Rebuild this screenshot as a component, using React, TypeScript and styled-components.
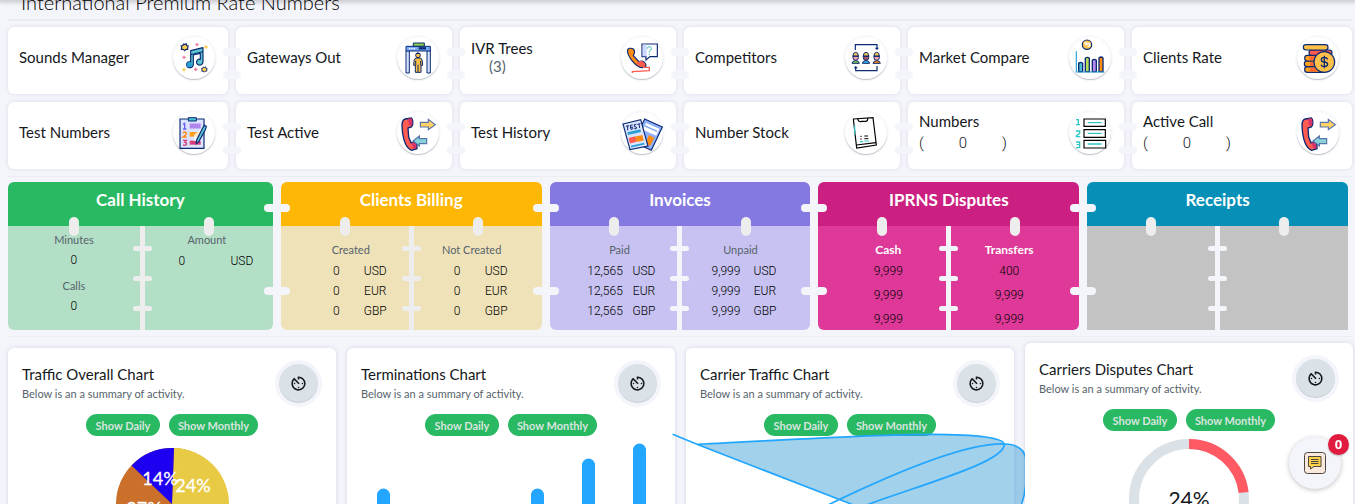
import React from 'react';
import styled, { createGlobalStyle } from 'styled-components';
import { MdAvTimer } from 'react-icons/md';

const page = '#f4f5fb';
const navy = '#0a2a72';

const GlobalStyle = createGlobalStyle`
  * { box-sizing: border-box; }
  body {
    margin: 0;
    background: ${page};
    color: #15181c;
    font-family: Lato, "Open Sans", sans-serif;
    font-size: 12px;
  }
  button { font-family: inherit; border: 0; padding: 0; cursor: pointer; }
  h1, h2, h3, p { margin: 0; font-weight: 400; }
`;

const Shell = styled.div`
  height: 100vh;
  overflow: hidden;
  background: ${page};
`;

const TopBar = styled.header`
  height: 0;
  position: relative;
  box-shadow: 0 0 4px 2px rgba(0, 0, 0, 0.22);
`;

const Main = styled.main`
  display: flex;
  flex-direction: column;
  padding: 0 3px 0 8px;
`;

const Heading = styled.h1`
  margin: -11px 0 4px 13px;
  font-size: 20px;
  font-weight: 300;
  line-height: 26px;
  color: #000;
`;

const Rule = styled.hr<{ $size: number; $after: number }>`
  width: 100%;
  height: ${(p) => p.$size}px;
  margin: 0 0 ${(p) => p.$after}px;
  border: 0;
  background: ${(p) => (p.$size > 1 ? '#eaebef' : '#ecedf3')};
`;

const TileGrid = styled.nav`
  display: grid;
  grid-template-columns: 220fr 216fr 216fr 216fr 216fr 220fr;
  gap: 8px;
  margin-bottom: 7px;
`;

const Tile = styled.a`
  position: relative;
  display: flex;
  align-items: center;
  justify-content: space-between;
  height: 67px;
  padding: 0 13px 6px 11px;
  border-radius: 6px;
  background: #fff;
  box-shadow: 0 0 4px rgba(30, 35, 90, 0.12);
  color: inherit;
  text-decoration: none;
`;

const TileText = styled.span`
  display: flex;
  flex-direction: column;
  padding-bottom: 2px;
`;

const TileTitle = styled.span<{ $tall?: boolean }>`
  font-size: 15px;
  line-height: ${(p) => (p.$tall ? 22 : 18)}px;
`;

const TileCount = styled.span`
  padding-left: 18px;
  font-size: 15px;
  line-height: 18px;
  color: #56636b;
`;

const TileTotal = styled.span`
  display: flex;
  justify-content: space-between;
  width: 88px;
  font-family: Roboto, sans-serif;
  font-size: 15px;
  font-weight: 300;
  line-height: 22px;
`;

const IconDisc = styled.span`
  display: grid;
  place-items: center;
  width: 42px;
  height: 42px;
  border-radius: 50%;
  background: #fff;
  box-shadow: 0 1px 1px rgba(40, 50, 60, 0.28), 0 0 0 2px #f8f9fd;
`;

const Art = styled.svg`
  width: 40px;
  height: 40px;
  overflow: visible;
`;

const TileLink = styled.i<{ $top: number }>`
  position: absolute;
  z-index: 1;
  top: ${(p) => p.$top}px;
  right: -13px;
  width: 18px;
  height: 8px;
  border-radius: 4px;
  background: ${page};
`;

const PanelRow = styled.section`
  display: grid;
  grid-template-columns: repeat(5, 1fr);
  margin-bottom: 6px;
`;

const PanelColumn = styled.div`
  position: relative;
  padding: 0 4px;
  &:first-child { padding-left: 0; }
`;

const Panel = styled.article<{ $square?: boolean }>`
  height: 148px;
  overflow: hidden;
  border-radius: ${(p) => (p.$square ? '6px 6px 0 0' : '6px')};
`;

const PanelTitle = styled.h2<{ $color: string }>`
  height: 44px;
  padding-top: 6px;
  background: ${(p) => p.$color};
  color: #fff;
  font-size: 17px;
  font-weight: 700;
  line-height: 24px;
  text-align: center;
`;

const PanelBody = styled.div<{ $color: string; $first?: boolean }>`
  display: grid;
  grid-template-columns: ${(p) => (p.$first ? '132fr 5px 128fr' : '1fr 5px 1fr')};
  height: 104px;
  background: ${(p) => p.$color};
`;

const Half = styled.div<{ $pad: string }>`
  position: relative;
  padding: ${(p) => p.$pad};
  text-align: center;
`;

const Peg = styled.i<{ $color: string }>`
  position: absolute;
  top: -9px;
  left: calc(50% - 5px);
  width: 10px;
  height: 19px;
  border-radius: 5px;
  background: ${(p) => p.$color};
`;

const Divider = styled.div<{ $color: string }>`
  display: flex;
  flex-direction: column;
  align-items: center;
  gap: 25px;
  padding-top: 20px;
  background: ${(p) => p.$color};
  i {
    flex: none;
    width: 19px;
    height: 5px;
    border-radius: 3px;
    background: ${(p) => p.$color};
    z-index: 1;
  }
`;

const PanelLink = styled.i<{ $top: number }>`
  position: absolute;
  z-index: 1;
  top: ${(p) => p.$top}px;
  right: -13px;
  width: 26px;
  height: 8px;
  border-radius: 4px;
  background: ${page};
`;

const Label = styled.h3<{ $light?: boolean }>`
  position: relative;
  font-size: ${(p) => (p.$light ? 12 : 11)}px;
  line-height: 20px;
  margin-bottom: ${(p) => (p.$light ? -1 : 0)}px;
  font-weight: ${(p) => (p.$light ? 700 : 400)};
  color: ${(p) => (p.$light ? '#fff' : '#56636b')};
`;

const Value = styled.p<{ $height: number; $after?: number }>`
  font-family: Roboto, sans-serif;
  font-size: 12px;
  font-weight: 300;
  line-height: ${(p) => p.$height}px;
  margin-bottom: ${(p) => p.$after || 0}px;
  color: #000;
`;

const Amounts = styled.table<{ $wide?: boolean }>`
  border-collapse: collapse;
  table-layout: fixed;
  width: ${(p) => (p.$wide ? 120 : 78)}px;
  margin: 1px auto 0;
  position: relative;
  left: 5px;
  td {
    padding: 0;
    font-family: Roboto, sans-serif;
    font-size: 12px;
    font-weight: 300;
    line-height: 20px;
    color: #000;
  }
`;

const ChartGrid = styled.section`
  display: grid;
  grid-template-columns: repeat(4, 1fr);
  gap: 11px;
  margin-right: 1px;
`;

const ChartCard = styled.article<{ $raised?: boolean }>`
  position: relative;
  margin-top: ${(p) => (p.$raised ? -5 : 0)}px;
  padding: 12px 14px;
  border-radius: 6px;
  background: #fff;
  box-shadow: 0 0 5px rgba(30, 35, 90, 0.14);
`;

const ChartHead = styled.header`
  display: flex;
  justify-content: space-between;
  height: 54px;
`;

const ChartTitle = styled.h2`
  padding-top: 3px;
  font-size: 15px;
  line-height: 22px;
`;

const ChartNote = styled.p`
  font-size: 11px;
  line-height: 18px;
  color: #56636b;
`;

const ClockButton = styled.button`
  display: grid;
  place-items: center;
  width: 47px;
  height: 47px;
  border: 4px solid ${page};
  border-radius: 50%;
  background: #dae1e7;
  box-shadow: inset 0 -1px 0 #c6cdd2;
  color: #15181c;
`;

const Switches = styled.div`
  display: flex;
  justify-content: center;
  gap: 9px;
`;

const Pill = styled.button<{ $wide?: boolean }>`
  width: ${(p) => (p.$wide ? 89 : 74)}px;
  height: 22px;
  border-radius: 11px;
  background: #28b962;
  color: #d8e5df;
  font-size: 11px;
  font-weight: 700;
`;

const Plot = styled.svg`
  display: block;
  width: 300px;
  height: 140px;
  margin: 0 auto;
  overflow: visible;
  text {
    font-family: Lato, sans-serif;
    text-anchor: middle;
  }
`;

const Chat = styled.button`
  position: fixed;
  z-index: 3;
  right: 14px;
  bottom: 15px;
  display: grid;
  place-items: center;
  width: 52px;
  height: 52px;
  border-radius: 50%;
  background: ${page};
  box-shadow: 0 1px 5px rgba(0, 0, 0, 0.25);
`;

const Badge = styled.span`
  position: absolute;
  top: -3px;
  right: -8px;
  width: 21px;
  height: 21px;
  border-radius: 50%;
  background: #e01b3f;
  box-shadow: 0 1px 2px rgba(0, 0, 0, 0.25);
  color: #fff;
  font: 700 13px/21px "Open Sans", sans-serif;
`;

const Sparkle = ({ x, y, c }: { x: number; y: number; c: string }) => (
  <path d={`M${x} ${y - 5}V${y + 5}M${x - 5} ${y}H${x + 5}`} stroke={c} strokeWidth="4" />
);

const Star = ({ x, y, r }: { x: number; y: number; r: number }) => (
  <path
    transform={`translate(${x} ${y}) scale(${r / 10})`}
    d="M-4-10 1-8 5-11 7-5 12-3 10 3 10 8 4 8 0 12-5 8-11 8-10 1-12-4-6-5Z"
    fill="#ffc94d" stroke={navy} strokeWidth="4" strokeLinejoin="round"
  />
);

const SoundsArt = () => (
  <Art viewBox="0 0 120 120">
    <Star x={32} y={27} r={9} />
    <Star x={91} y={94} r={7} />
    <Sparkle x={69} y={20} c="#f07aa0" />
    <Sparkle x={96} y={27} c="#ffc94d" />
    <Sparkle x={30} y={58} c="#f07aa0" />
    <Sparkle x={30} y={95} c="#ffc94d" />
    <Sparkle x={65} y={94} c="#f07aa0" />
    <path d="M50 38 87 29V71C87 79 80 82 75 81 68 80 66 73 69 68 71 64 76 63 79 64V46L58 51V80C57 87 51 90 45 89 38 88 36 80 39 75 42 71 47 71 50 72Z" fill="#5cc4d0" stroke={navy} strokeWidth="3.5" strokeLinejoin="round" />
    <ellipse cx="46" cy="80" rx="8" ry="7" fill="#289fd2" />
    <path d="M50 50 87 41" stroke={navy} strokeWidth="3" />
  </Art>
);

const GatewayArt = () => (
  <Art viewBox="0 0 120 120">
    <path d="M46 15H79V25H46Z" fill="#8fd14f" stroke={navy} strokeWidth="3" />
    <path d="M24 38H34V105H24ZM87 38H97V105H87Z" fill="#d5e2ff" stroke={navy} strokeWidth="3" />
    <path d="M24 25H97V39H24Z" fill="#78aaf5" stroke={navy} strokeWidth="3" />
    <path d="M62 31H84" stroke={navy} strokeWidth="7" />
    <path d="M33 32H52" stroke="#fff" strokeWidth="4" strokeDasharray="4 3" />
    <circle cx="60" cy="52" r="7" fill="#ffbd42" stroke={navy} strokeWidth="3" />
    <path d="M52 48Q60 39 68 48Z" fill={navy} />
    <path d="M53 60H68Q74 62 74 82H69V103H52V82H47Q47 62 53 60Z" fill="#ffbd42" stroke={navy} strokeWidth="3" />
    <path d="M53 68V82M68 68V82M60 80V103" stroke={navy} strokeWidth="3" />
  </Art>
);

const IvrArt = () => (
  <Art viewBox="0 0 120 120">
    <path d="M60 18H106V56H84L72 66V56H60Z" fill="#fff" stroke={navy} strokeWidth="3.5" />
    <path d="M62 20H74V55H62Z" fill="#cbd9ff" />
    <path d="M76 32Q76 26 82 26T88 32Q88 37 82 40V44M82 48V51" fill="none" stroke="#3fb9bd" strokeWidth="3" />
    <path d="M17 36C17 31 27 28 35 34 41 41 36 48 34 53L51 71C56 68 64 68 68 74 74 79 73 86 68 87 56 93 42 83 30 68 20 55 15 45 17 36Z" fill="#ff8b12" stroke={navy} strokeWidth="3.5" />
    <path d="M42 76 53 70C61 66 72 76 69 85 59 90 51 84 42 76Z" fill="#ff5b50" />
    <path d="M63 88H82V98L31 101V105" fill="none" stroke="#ff5b50" strokeWidth="4" />
  </Art>
);

const CompetitorsArt = () => (
  <Art viewBox="0 0 120 120">
    <path d="M28 36V20H93V30M93 84V98H29V90" fill="none" stroke={navy} strokeWidth="3.5" />
    <path d="M86 29H99L93 36ZM23 91H36L29 84Z" fill={navy} />
    {[{ x: 29, skin: '#f7a7ad', body: '#8ad14b' }, { x: 60, skin: '#a9575b', body: '#45b9e8' }, { x: 92, skin: '#f7a7ad', body: '#ff8b12' }].map((m) => (
      <g key={m.x} transform={`translate(${m.x} 0)`} stroke={navy} strokeWidth="3">
        <path d="M-11 76Q-10 68 0 68T11 76Z" fill={m.body} />
        <circle cy="59" r="8" fill={m.skin} />
        <path d="M-10 55H10M-8 54Q-8 43 0 43T8 54Z" fill="#ffc94d" />
      </g>
    ))}
  </Art>
);

const MarketArt = () => (
  <Art viewBox="0 0 120 120">
    <circle cx="51" cy="20" r="14" fill="#ffc04a" stroke={navy} strokeWidth="3.5" />
    <path d="M43 15H50V20H45M53 17H59V23L53 26" fill="none" stroke="#fff" strokeWidth="4" />
    {[{ x: 26, y: 73, c: '#48bdd0' }, { x: 46, y: 58, c: '#b5df58' }, { x: 67, y: 64, c: '#b98cf0' }, { x: 87, y: 57, c: '#ff8b12' }].map((b) => (
      <path key={b.x} d={`M${b.x} 101V${b.y + 3}Q${b.x + 6} ${b.y - 3} ${b.x + 12} ${b.y + 3}V101Z`} fill={b.c} stroke={navy} strokeWidth="4" />
    ))}
    <path d="M19 40V102H103" fill="none" stroke="#2a9fd6" strokeWidth="3.5" />
  </Art>
);

const RateArt = () => (
  <Art viewBox="0 0 120 120">
    <g stroke={navy} strokeWidth="3.5">
      <rect x="20" y="86" width="60" height="17" rx="8" fill="#ffa01e" />
      <rect x="19" y="69" width="60" height="17" rx="8" fill="#ffa01e" />
      <rect x="20" y="52" width="60" height="17" rx="8" fill="#ffa01e" />
      <rect x="33" y="36" width="69" height="16" rx="8" fill="#ff5b50" />
      <rect x="16" y="20" width="74" height="16" rx="8" fill="#ffc04a" />
    </g>
    <path d="M34 61H54M36 78H50M36 95H56" stroke="#ff6a30" strokeWidth="12" />
    <circle cx="79" cy="72" r="31" fill="#ffc04a" stroke={navy} strokeWidth="3.5" />
    <path d="M89 64Q86 58 79 58 70 58 70 65T79 72Q89 73 89 79T79 86Q71 86 69 80M79 53V91" fill="none" stroke={navy} strokeWidth="4" />
  </Art>
);

const TestNumbersArt = () => (
  <Art viewBox="0 0 120 120">
    <path d="M18 18H90V106H18Z" fill="#dbe3ff" stroke={navy} strokeWidth="3.5" />
    <path d="M43 14H67V24H43Z" fill="#48bdd0" stroke={navy} strokeWidth="3" />
    <g fill="none" strokeWidth="4">
      <path d="M27 34 32 31V48M27 48H37" stroke="#6c5cf0" />
      <path d="M27 61Q27 57 32 57T37 61 27 72H38" stroke="#ff8b12" />
      <path d="M27 82H37L32 88Q38 88 38 93T27 96" stroke="#d83d7d" />
      <path d="M47 39H80" stroke="#ae87ed" strokeWidth="15" />
      <path d="M47 64H80" stroke="#ff9d1c" strokeWidth="14" />
      <path d="M47 89H80" stroke="#d83d7d" strokeWidth="12" />
    </g>
    <path d="M60 84V66L82 46V84Z" fill="#fff" opacity=".75" />
    <path d="M86 45 91 37 97 40 94 50 75 85 67 92 68 81Z" fill="#5cc4d0" stroke={navy} strokeWidth="3.5" />
  </Art>
);

const CallArt = () => (
  <Art viewBox="0 0 120 120">
    <path d="M22 18 40 15Q46 20 44 35L40 42 30 45 32 72 39 89 51 87Q58 94 57 107L41 112C25 105 14 83 12 38 12 25 16 19 22 18Z" fill="#ff5b50" stroke={navy} strokeWidth="4" />
    <path d="M30 17 41 16Q45 25 42 37L34 38ZM41 89 51 88Q57 95 55 106L46 107Z" fill="#d83469" />
    <path d="M67 28H91V19L112 35 91 50V42H67Z" fill="#ffd166" stroke="#5874ab" strokeWidth="3.5" />
    <path d="M86 77H64V69L45 84 64 99V92H86Z" fill="#87d4d8" stroke="#5874ab" strokeWidth="3.5" />
  </Art>
);

const HistoryArt = () => (
  <Art viewBox="0 0 120 120">
    <path d="M68 18 121 42 88 112 35 88Z" fill="#8fb0fa" stroke={navy} strokeWidth="3.5" />
    <path d="M72 30 112 47 103 68 62 50Z" fill="#fff" />
    <path d="M67 38 105 55" stroke="#7ca2f2" strokeWidth="4" />
    <path d="M80 66 97 74 85 98 72 92Z" fill="#ff8b12" />
    <path d="M3 33 56 20 78 99 24 110Z" fill="#dbe3ff" stroke={navy} strokeWidth="3.5" />
    <path d="M12 40 21 38M17 39V52M32 36 25 37 27 49 34 47M26 43H33M43 34 37 35V41L43 42V47H37M46 34 55 32M51 33 53 45" fill="none" stroke={navy} strokeWidth="3" />
    <path d="M17 62 56 53" stroke="#2a9fd6" strokeWidth="8" />
    <path d="M22 83 42 78" stroke="#ff5b50" strokeWidth="17" />
    <path d="M42 79 63 74" stroke="#ff8b12" strokeWidth="17" />
    <path d="M27 101 67 92" stroke="#2a9fd6" strokeWidth="5" />
  </Art>
);

const StockArt = () => (
  <Art viewBox="0 0 120 120" fill="none" strokeWidth="3.5">
    <path d="M22 18 81 14 91 96 32 105Z" stroke="#000" />
    <path d="M35 17Q37 28 47 25H60Q66 24 65 15M31 96 90 89" stroke="#000" />
    <path d="M43 70H47M55 69H66M43 78H47M55 77H67" stroke="#000" strokeWidth="3" />
    <path d="M26 37V61L29 64M42 86H51M55 84H69" stroke="#32c5c6" />
  </Art>
);

const NumbersArt = () => (
  <Art viewBox="0 0 120 120" fill="none">
    <path d="M18 20H25V34M18 35H30M18 54H29V61L19 69V71H31M18 87H29V104H18M20 95H29" stroke="#32c5c6" strokeWidth="4" />
    <path d="M42 18H106V40H42ZM42 50H106V73H42ZM42 82H107V105H42Z" stroke="#000" strokeWidth="3.5" />
    <path d="M53 29H95M53 61H95M53 93H95" stroke="#32c5c6" strokeWidth="4" />
  </Art>
);

type TileData = { title: string; art: () => React.ReactElement; count?: string; total?: string };

const tiles: TileData[] = [
  { title: 'Sounds Manager', art: SoundsArt },
  { title: 'Gateways Out', art: GatewayArt },
  { title: 'IVR Trees', art: IvrArt, count: '(3)' },
  { title: 'Competitors', art: CompetitorsArt },
  { title: 'Market Compare', art: MarketArt },
  { title: 'Clients Rate', art: RateArt },
  { title: 'Test Numbers', art: TestNumbersArt },
  { title: 'Test Active', art: CallArt },
  { title: 'Test History', art: HistoryArt },
  { title: 'Number Stock', art: StockArt },
  { title: 'Numbers', art: NumbersArt, total: '0' },
  { title: 'Active Call', art: CallArt, total: '0' },
];

type Side = { label: string; rows: string[][] };
type PanelData = { title: string; head: string; body: string; line: string; light?: boolean; sides?: Side[] };

const currencies = (n: string) => [[n, 'USD'], [n, 'EUR'], [n, 'GBP']];

const panels: PanelData[] = [
  { title: 'Call History', head: '#28b962', body: '#b3dfc7', line: '#ededed' },
  { title: 'Clients Billing', head: '#feb704', body: '#efe2b9', line: '#ededed', sides: [{ label: 'Created', rows: currencies('0') }, { label: 'Not Created', rows: currencies('0') }] },
  { title: 'Invoices', head: '#8379e0', body: '#c7c2f1', line: page, sides: [{ label: 'Paid', rows: currencies('12,565') }, { label: 'Unpaid', rows: currencies('9,999') }] },
  { title: 'IPRNS Disputes', head: '#cb2082', body: '#de3998', line: page, light: true, sides: [{ label: 'Cash', rows: [['9,999'], ['9,999'], ['9,999']] }, { label: 'Transfers', rows: [['400'], ['9,999'], ['9,999']] }] },
  { title: 'Receipts', head: '#0690b8', body: '#c3c3c3', line: page },
];

const AmountTable = ({ rows, wide }: { rows: string[][]; wide?: boolean }) => (
  <Amounts $wide={wide}>
    <tbody>
      {rows.map((r, i) => <tr key={i}>{r.map((c) => <td key={c}>{c}</td>)}</tr>)}
    </tbody>
  </Amounts>
);

const SideContent = ({ side, light }: { side: Side; light?: boolean }) => (
  <>
    <Label $light={light}>{side.label}</Label>
    {light ? side.rows.map((r, i) => <Value key={i} $height={24}>{r[0]}</Value>) : <AmountTable rows={side.rows} />}
  </>
);

const StatPanel = ({ data, index }: { data: PanelData; index: number }) => {
  const first = index === 0;
  return (
    <PanelColumn>
      <Panel $square={index === 4}>
        <PanelTitle $color={data.head}>{data.title}</PanelTitle>
        <PanelBody $color={data.body} $first={first}>
          <Half $pad={first ? '4px 0 0' : '14px 0 0 12px'}>
            <Peg $color="#ededed" />
            {first && (
              <>
                <Label>Minutes</Label>
                <Value $height={20} $after={6}>0</Value>
                <Label>Calls</Label>
                <Value $height={20}>0</Value>
              </>
            )}
            {data.sides && <SideContent side={data.sides[0]} light={data.light} />}
          </Half>
          <Divider $color={data.line}><i /><i /><i /></Divider>
          <Half $pad={first ? '4px 4px 0 0' : '14px 12px 0 0'}>
            <Peg $color="#ededed" />
            {first && (
              <>
                <Label>Amount</Label>
                <AmountTable wide rows={[['0', 'USD']]} />
              </>
            )}
            {data.sides && <SideContent side={data.sides[1]} light={data.light} />}
          </Half>
        </PanelBody>
      </Panel>
      {index < 4 && <><PanelLink $top={22} /><PanelLink $top={105} /></>}
    </PanelColumn>
  );
};

const PiePlot = () => (
  <Plot viewBox="0 0 300 140">
    <circle cx="150" cy="68" r="56" fill="#ca702a" />
    <path d="M150 68 152 12A56 56 0 0 1 150 124Z" fill="#e8ca45" />
    <path d="M150 68 109.500 29.500A56 56 0 0 1 152 12Z" fill="#1d00f0" />
    <g fill="#fff" stroke="#fff" strokeWidth=".3" fontSize="18">
      <text x="138" y="49">14%</text>
      <text x="171" y="56">24%</text>
      <text x="122" y="79">27%</text>
    </g>
  </Plot>
);

const BarPlot = () => (
  <Plot viewBox="0 0 300 140">
    {[{ x: 16, y: 53 }, { x: 67, y: 98 }, { x: 118, y: 83 }, { x: 170, y: 53 }, { x: 221, y: 23 }, { x: 272, y: 8 }].map((b) => (
      <path key={b.x} d={`M${b.x} 140V${b.y + 6}a6.500 6.500 0 0 1 13 0V140Z`} fill="#22a6ff" />
    ))}
  </Plot>
);

const CurvePlot = () => (
  <Plot viewBox="0 0 300 140">
    <g transform="translate(-29 -101) scale(.3333)">
      <path d="M78 328C380 313 620 298 760 298 900 297 990 307 1000 327 1035 326 1063 345 1064 372V450Q1062 480 1052 507L1030 560H680L540 507Z" fill="rgba(34,145,207,.42)" />
      <path d="M5 298 78 328 540 507 620 540M78 328C380 313 620 298 760 298 930 297 1000 310 1000 329 998 380 780 440 595 507L500 540M400 545C640 425 880 322 1000 327 1035 326 1063 345 1064 372V450Q1062 480 1052 507" fill="none" stroke="#22a6ff" strokeWidth="5" />
    </g>
  </Plot>
);

const DonutPlot = () => (
  <Plot viewBox="0 0 300 140">
    <circle cx="150" cy="68" r="55" fill="none" stroke="#dae1e7" strokeWidth="10" />
    <path d="M150 13A55 55 0 0 1 204.600 61.500" fill="none" stroke="#ff5a64" strokeWidth="10" />
    <text x="150" y="76" fontSize="21" fill="#15181c">24%</text>
  </Plot>
);

const charts = [
  { title: 'Traffic Overall Chart', plot: PiePlot },
  { title: 'Terminations Chart', plot: BarPlot },
  { title: 'Carrier Traffic Chart', plot: CurvePlot },
  { title: 'Carriers Disputes Chart', plot: DonutPlot },
];

export default function App() {
  return (
    <Shell>
      <GlobalStyle />
      <TopBar />
      <Main>
        <Heading>International Premium Rate Numbers</Heading>
        <Rule $size={2} $after={6} />
        <TileGrid>
          {tiles.map((t, i) => (
            <Tile key={t.title} href="#">
              <TileText>
                <TileTitle $tall={!!t.total}>{t.title}</TileTitle>
                {t.count && <TileCount>{t.count}</TileCount>}
                {t.total && <TileTotal><span>(</span><span>{t.total}</span><span>)</span></TileTotal>}
              </TileText>
              <IconDisc><t.art /></IconDisc>
              {i % 6 < 5 && <><TileLink $top={21} /><TileLink $top={44} /></>}
            </Tile>
          ))}
        </TileGrid>
        <Rule $size={1} $after={5} />
        <PanelRow>
          {panels.map((p, i) => <StatPanel key={p.title} data={p} index={i} />)}
        </PanelRow>
        <Rule $size={1} $after={11} />
        <ChartGrid>
          {charts.map((c, i) => (
            <ChartCard key={c.title} $raised={i === 3}>
              <ChartHead>
                <div>
                  <ChartTitle>{c.title}</ChartTitle>
                  <ChartNote>Below is an a summary of activity.</ChartNote>
                </div>
                <ClockButton aria-label="Refresh interval"><MdAvTimer size={19} /></ClockButton>
              </ChartHead>
              <Switches>
                <Pill>Show Daily</Pill>
                <Pill $wide>Show Monthly</Pill>
              </Switches>
              <c.plot />
            </ChartCard>
          ))}
        </ChartGrid>
      </Main>
      <Chat aria-label="Messages">
        <svg width="22" height="22" viewBox="0 0 22 22">
          <rect x=".5" y=".5" width="21" height="21" rx="3" fill="#f9e9dc" stroke="#4d4742" />
          <path d="M4.500 4.500H17V14.500H10L6.500 17V14.500H4.500Z" fill="#fbd14c" stroke="#4d4742" />
          <path d="M7 7.500H14.500M7 9.500H14.500M7 11.500H14.500" stroke="#4d4742" />
        </svg>
        <Badge>0</Badge>
      </Chat>
    </Shell>
  );
}
